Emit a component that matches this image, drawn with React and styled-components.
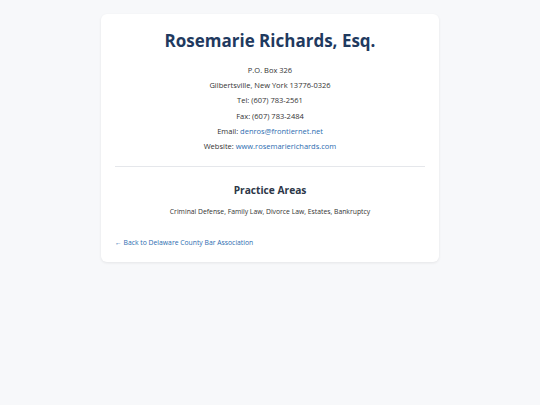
import React from "react";
import styled, { createGlobalStyle } from "styled-components";

const GlobalStyle = createGlobalStyle`
    html, body {
        margin: 0;
        padding: 0;
        background: #f7f8fa;
    }
    body {
        font-family: "Open Sans", "Noto Sans", sans-serif;
        color: #333;
    }
`;

const Page = styled.div`
    padding: 14px 0;
`;

const Card = styled.div`
    width: 338px;
    margin: 0 auto;
    box-sizing: border-box;
    background: #fff;
    border-radius: 6px;
    box-shadow: 0 1px 3px rgba(0, 0, 0, 0.08);
    padding: 15px 14px 15px;
`;

const Name = styled.h1`
    margin: 0 0 11px;
    text-align: center;
    font-size: 17px;
    line-height: 23px;
    font-weight: 700;
    color: #1f3a5f;
`;

const Contact = styled.div`
    text-align: center;
    font-size: 7.5px;
    line-height: 15.2px;
    color: #333;
`;

const Line = styled.p`
    margin: 0;
`;

const Link = styled.a`
    color: #2b6cb0;
    text-decoration: none;
`;

const Divider = styled.hr`
    border: 0;
    border-top: 1px solid #e5e7eb;
    margin: 12px 0 16px;
`;

const Heading = styled.h2`
    margin: 0 0 10px;
    text-align: center;
    font-size: 10.2px;
    line-height: 14px;
    font-weight: 700;
    color: #2d3748;
`;

const Areas = styled.p`
    margin: 0 0 21px;
    text-align: center;
    font-size: 6.8px;
    line-height: 9.4px;
    color: #333;
`;

const Back = styled.p`
    margin: 0;
    font-size: 6.8px;
    line-height: 9.4px;
`;

export default function App() {
    return (
        <>
            <GlobalStyle />
            <Page>
                <Card>
                    <Name>Rosemarie Richards, Esq.</Name>
                    <Contact>
                        <Line>P.O. Box 326</Line>
                        <Line>Gilbertsville, New York 13776-0326</Line>
                        <Line>Tel: (607) 783-2561</Line>
                        <Line>Fax: (607) 783-2484</Line>
                        <Line>
                            Email: <Link href="#">denros@frontiernet.net</Link>
                        </Line>
                        <Line>
                            Website: <Link href="#">www.rosemarierichards.com</Link>
                        </Line>
                    </Contact>
                    <Divider />
                    <Heading>Practice Areas</Heading>
                    <Areas>Criminal Defense, Family Law, Divorce Law, Estates, Bankruptcy</Areas>
                    <Back>
                        <Link href="#">← Back to Delaware County Bar Association</Link>
                    </Back>
                </Card>
            </Page>
        </>
    );
}
